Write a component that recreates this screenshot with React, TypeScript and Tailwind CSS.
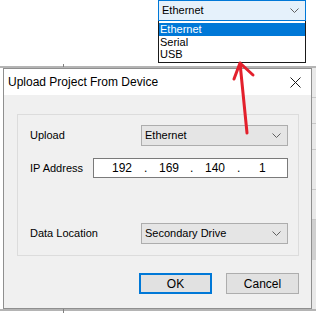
import React from "react";

const font = { fontFamily: '"Liberation Sans", Arial, sans-serif' };

function Chevron() {
  return (
    <svg width="9" height="5" viewBox="0 0 9 5" className="shrink-0">
      <path d="M0.5 0.5 L4.5 4.5 L8.5 0.5" fill="none" stroke="#606060" strokeWidth="1" />
    </svg>
  );
}

function Combo({ value }: { value: string }) {
  return (
    <div className="flex h-[21px] w-[147px] items-center justify-between border border-[#adadad] bg-[#e5e5e5] pl-[3px] pr-[6px] text-[11px] text-black">
      <span>{value}</span>
      <Chevron />
    </div>
  );
}

export default function App() {
  const ip = ["192", "169", "140", "1"];
  return (
    <div className="relative h-[313px] w-[316px] overflow-hidden bg-white" style={font}>
      {/* background application lines */}
      <div className="absolute left-0 top-[66px] h-[2px] w-[316px] bg-[#b4b4b4]" />
      <div className="absolute left-[63px] top-[64px] h-[3px] w-[1px] bg-[#808080]" />
      <div className="absolute left-0 top-[309px] h-[2px] w-[316px] bg-[#b4b4b4]" />
      <div className="absolute left-[63px] top-[309px] h-[4px] w-[1px] bg-[#808080]" />
      <div className="absolute left-[311px] top-[68px] flex h-[241px] w-[5px] flex-col bg-[#e9e9e9]">
        <div className="h-[30px] border-b border-[#c8c8c8]" />
        <div className="h-[26px] border-b border-[#c8c8c8]" />
        <div className="h-[26px] border-b border-[#c8c8c8]" />
        <div className="h-[40px] border-b border-[#c8c8c8]" />
        <div className="h-[30px] border-b border-[#c8c8c8]" />
        <div className="h-[40px] bg-[#d0d0d0]" />
      </div>

      {/* dialog */}
      <div className="absolute left-[3px] top-[68px] flex h-[241px] w-[309px] flex-col border border-[#8f8f8f] bg-[#f0f0f0]">
        <div className="flex h-[26px] items-center justify-between bg-white pl-[4px] pr-[10px]">
          <span className="text-[12px] text-black">Upload Project From Device</span>
          <svg width="11" height="11" viewBox="0 0 11 11">
            <path d="M0.5 0.5 L10.5 10.5 M10.5 0.5 L0.5 10.5" stroke="#1a1a1a" strokeWidth="1" />
          </svg>
        </div>
        <div className="flex flex-col pl-[13px] pr-[12px] pt-[19px]">
          <div className="flex flex-col border border-[#dcdcdc] pb-[11px] pl-[12px] pr-[10px] pt-[10px] text-[11px] text-black">
            <div className="flex items-center justify-between">
              <span>Upload</span>
              <Combo value="Ethernet" />
            </div>
            <div className="mt-[12px] flex items-center justify-between">
              <span>IP Address</span>
              <div className="relative flex h-[20px] w-[195px] items-center border border-[#7a7a7a] bg-white text-[12px]">
                <span className="absolute left-[18px]">192</span>
                <span className="absolute left-[50px]">.</span>
                <span className="absolute left-[65px]">169</span>
                <span className="absolute left-[96px]">.</span>
                <span className="absolute left-[111px]">140</span>
                <span className="absolute left-[143px]">.</span>
                <span className="absolute left-[165px]">{ip[3]}</span>
              </div>
            </div>
            <div className="mt-[45px] flex items-center justify-between">
              <span>Data Location</span>
              <Combo value="Secondary Drive" />
            </div>
          </div>
          <div className="mt-[17px] flex justify-end gap-[14px] text-[12px] text-black">
            <div className="flex h-[21px] w-[73px] items-center justify-center border-2 border-[#0078d7] bg-[#e1e1e1]">
              OK
            </div>
            <div className="flex h-[21px] w-[73px] items-center justify-center border border-[#adadad] bg-[#e1e1e1]">
              Cancel
            </div>
          </div>
        </div>
      </div>

      {/* open dropdown */}
      <div className="absolute left-[158px] top-0 flex w-[148px] flex-col text-[11px] text-black">
        <div className="flex h-[21px] items-center justify-between border border-[#0078d7] bg-[#e5f1fb] pl-[3px] pr-[6px]">
          <span>Ethernet</span>
          <Chevron />
        </div>
        <div className="flex flex-col border border-t-0 border-[#1a1a1a] bg-white pb-[2px] pt-[2px]">
          <div className="flex h-[13px] items-center bg-[#0078d7] pl-[1px] text-white">Ethernet</div>
          <div className="flex h-[12px] items-center pl-[1px]">Serial</div>
          <div className="flex h-[12px] items-center pl-[1px]">USB</div>
        </div>
      </div>

      {/* red arrow */}
      <svg className="pointer-events-none absolute left-0 top-0" width="316" height="313">
        <path
          d="M247 133 L240 63 M234 79 L240 63 L253 75"
          fill="none"
          stroke="#e3202c"
          strokeWidth="3"
          strokeLinecap="round"
          strokeLinejoin="round"
        />
      </svg>
    </div>
  );
}
